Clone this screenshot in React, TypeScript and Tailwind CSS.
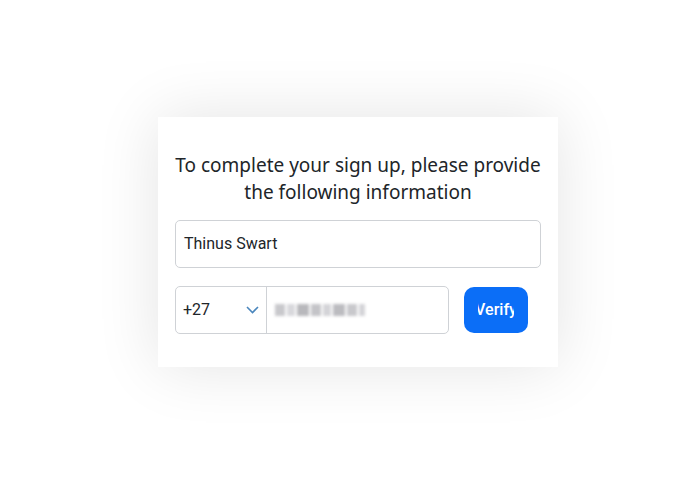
import React from "react";

export default function App() {
  return (
    <div className="min-h-[501px] w-[700px] bg-white pt-[117px] pl-[158px]">
      <div className="w-[400px] h-[250px] bg-white shadow-[0_0_60px_rgba(0,0,0,0.11)] px-[17px] pt-[35px]">
        <h1
          className="text-center text-[19px] leading-[27px] text-[#212529] font-normal"
          style={{ fontFamily: '"Noto Sans", "Open Sans", sans-serif' }}
        >
          To complete your sign up, please provide
          <br />
          the following information
        </h1>
        <div
          className="mt-[14px] h-[48px] w-[366px] rounded-[5px] border border-[#cfd2d6] flex items-center pl-[8px] text-[16px] text-[#212529]"
          style={{ fontFamily: 'Roboto, "Liberation Sans", sans-serif' }}
        >
          Thinus Swart
        </div>
        <div className="mt-[18px] flex items-center">
          <div
            className="h-[48px] w-[274px] rounded-[5px] border border-[#cfd2d6] flex"
            style={{ fontFamily: 'Roboto, "Liberation Sans", sans-serif' }}
          >
            <div className="w-[91px] h-full flex items-center justify-between pl-[7px] pr-[7px] border-r border-[#cfd2d6] text-[16px] text-[#212529]">
              <span>+27</span>
              <svg width="13" height="8" viewBox="0 0 13 8" fill="none">
                <path d="M1 1l5.5 5.5L12 1" stroke="#4a86bd" strokeWidth="1.6" />
              </svg>
            </div>
            <div className="flex-1 flex items-center pl-[8px]">
              <span className="flex gap-[2px] blur-[1.5px]">
                <span className="block w-[10px] h-[12px] bg-[#c8c8cc]" />
                <span className="block w-[8px] h-[12px] bg-[#d8d8dc]" />
                <span className="block w-[12px] h-[12px] bg-[#b8b8bc]" />
                <span className="block w-[10px] h-[12px] bg-[#c4c4c8]" />
                <span className="block w-[8px] h-[12px] bg-[#d4d4d8]" />
                <span className="block w-[12px] h-[12px] bg-[#bcbcc0]" />
                <span className="block w-[10px] h-[12px] bg-[#c8c8cc]" />
                <span className="block w-[6px] h-[12px] bg-[#d4d4d8]" />
              </span>
            </div>
          </div>
          <button
            className="ml-[15px] h-[46px] w-[64px] rounded-[10px] bg-[#0b6ef7] text-white text-[16px] font-medium flex items-center justify-center"
            style={{ fontFamily: 'Roboto, "Liberation Sans", sans-serif' }}
          >
            <span className="w-[36px] overflow-hidden flex justify-center whitespace-nowrap">
              <span className="shrink-0">Verify</span>
            </span>
          </button>
        </div>
      </div>
    </div>
  );
}
